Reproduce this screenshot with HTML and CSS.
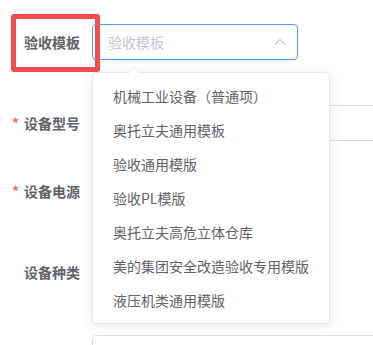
FILE: index.html
```html
<!DOCTYPE html>
<html lang="zh">
<head>
<meta charset="utf-8">
<link rel="stylesheet" href="styles.css">
</head>
<body>
<div class="form">
  <div class="row row-first">
    <label class="label">验收模板</label>
    <div class="select">
      <div class="input focused">
        <span class="placeholder">验收模板</span>
        <svg class="chevron" width="12" height="8" viewBox="0 0 12 8"><path d="M0.8 6.6 L6 1.6 L11.2 6.6" fill="none" stroke="#c0c4cc" stroke-width="1.2"/></svg>
      </div>
      <div class="dropdown">
        <span class="arrow"></span>
        <ul class="options">
          <li>机械工业设备（普通项）</li>
          <li>奥托立夫通用模板</li>
          <li>验收通用模版</li>
          <li>验收PL模版</li>
          <li>奥托立夫高危立体仓库</li>
          <li>美的集团安全改造验收专用模版</li>
          <li>液压机类通用模版</li>
        </ul>
      </div>
    </div>
    <div class="highlight"></div>
  </div>
  <div class="row row-second">
    <label class="label"><span class="star">*</span>设备型号</label>
    <div class="input wide"></div>
  </div>
  <div class="row row-third">
    <label class="label"><span class="star">*</span>设备电源</label>
    <div class="blank"></div>
  </div>
  <div class="row">
    <label class="label">设备种类</label>
    <div class="blank"></div>
  </div>
  <div class="row">
    <label class="label"></label>
    <div class="input wide"></div>
  </div>
</div>
</body>
</html>
```
FILE: styles.css
```css
html, body {
  margin: 0;
  padding: 0;
  background: #ffffff;
  font-family: "Noto Sans CJK SC", "Noto Sans", sans-serif;
  font-size: 14px;
  color: #606266;
  overflow: hidden;
}
.form {
  padding-top: 24px;
  width: 373px;
  height: 345px;
  box-sizing: border-box;
  overflow: hidden;
}
.row {
  display: flex;
  align-items: center;
  height: 36px;
  margin-bottom: 45px;
  position: relative;
}
.row-second { margin-bottom: 32px; }
.label {
  width: 92px;
  flex: none;
  box-sizing: border-box;
  padding-right: 12px;
  text-align: right;
  font-weight: 700;
  color: #606266;
  line-height: 36px;
}
.star {
  color: #f56c6c;
  margin-right: 5px;
  font-weight: 700;
}
.select {
  position: relative;
  width: 206px;
  height: 36px;
}
.input {
  height: 36px;
  box-sizing: border-box;
  border: 1px solid #dcdfe6;
  border-radius: 4px;
  background: #fff;
  display: flex;
  align-items: center;
  padding: 0 11px 0 15px;
}
.input.focused {
  border-color: #409eff;
}
.input.wide {
  flex: 1;
  margin-right: -40px;
}
.placeholder {
  flex: 1;
  color: #c0c4cc;
}
.chevron {
  display: block;
}
.blank { flex: 1; }
.dropdown {
  position: absolute;
  left: 0;
  top: 48px;
  z-index: 5;
  background: #fff;
  border: 1px solid #e4e7ed;
  border-radius: 4px;
  box-shadow: 0 2px 12px 0 rgba(0, 0, 0, 0.1);
  white-space: nowrap;
  min-width: 206px;
}
.arrow {
  position: absolute;
  top: -6px;
  left: 35px;
  width: 0;
  height: 0;
  border-left: 6px solid transparent;
  border-right: 6px solid transparent;
  border-bottom: 6px solid #e4e7ed;
}
.arrow::after {
  content: "";
  position: absolute;
  left: -5px;
  top: 1px;
  border-left: 5px solid transparent;
  border-right: 5px solid transparent;
  border-bottom: 5px solid #fff;
}
.options {
  list-style: none;
  margin: 0;
  padding: 6px 0;
}
.options li {
  height: 34px;
  line-height: 34px;
  padding: 0 20px;
  color: #606266;
  font-size: 14px;
}
.highlight {
  position: absolute;
  left: 11px;
  top: -10px;
  width: 89px;
  height: 58px;
  box-sizing: border-box;
  border: 5px solid #f34b4f;
  border-radius: 3px;
  z-index: 6;
}
```
